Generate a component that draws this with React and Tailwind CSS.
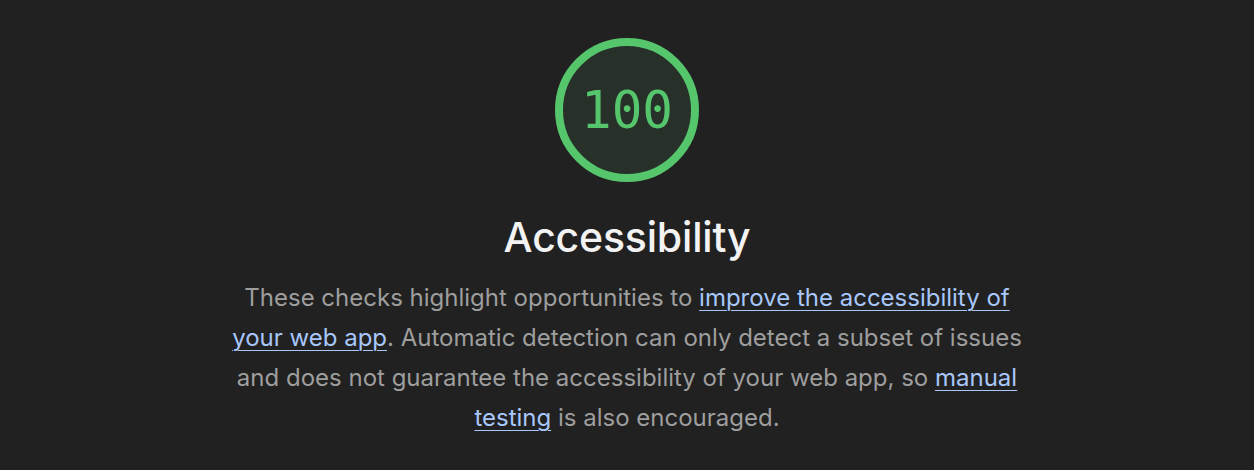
export default function App() {
  const link = "text-[#a8c7fa] underline decoration-1 underline-offset-[4px]";
  return (
    <div className="w-[1254px] h-[470px] bg-[#212121] flex flex-col items-center pt-[37px]" style={{ fontFamily: "Inter, 'Noto Sans', sans-serif" }}>
      <div className="relative w-[146px] h-[146px]">
        <svg width="146" height="146" viewBox="0 0 146 146" className="absolute inset-0">
          <circle cx="73" cy="73" r="68" fill="#28302a" stroke="#56c66c" strokeWidth="8" />
        </svg>
        <div className="absolute inset-0 flex items-center justify-center text-[#56c66c] text-[51px] leading-none" style={{ fontFamily: "'DejaVu Sans Mono', monospace" }}>
          100
        </div>
      </div>
      <h1 className="mt-[28px] text-[41px] leading-[52px] font-medium text-[#f3f3f3] tracking-[-0.2px]">Accessibility</h1>
      <p className="mt-[15px] w-[840px] text-center text-[24px] leading-[40px] text-[#9e9e9e]">
        These checks highlight opportunities to <a className={link}>improve the accessibility of</a>
        <br />
        <a className={link}>your web app</a>. Automatic detection can only detect a subset of issues
        <br />
        and does not guarantee the accessibility of your web app, so <a className={link}>manual</a>
        <br />
        <a className={link}>testing</a> is also encouraged.
      </p>
    </div>
  );
}
